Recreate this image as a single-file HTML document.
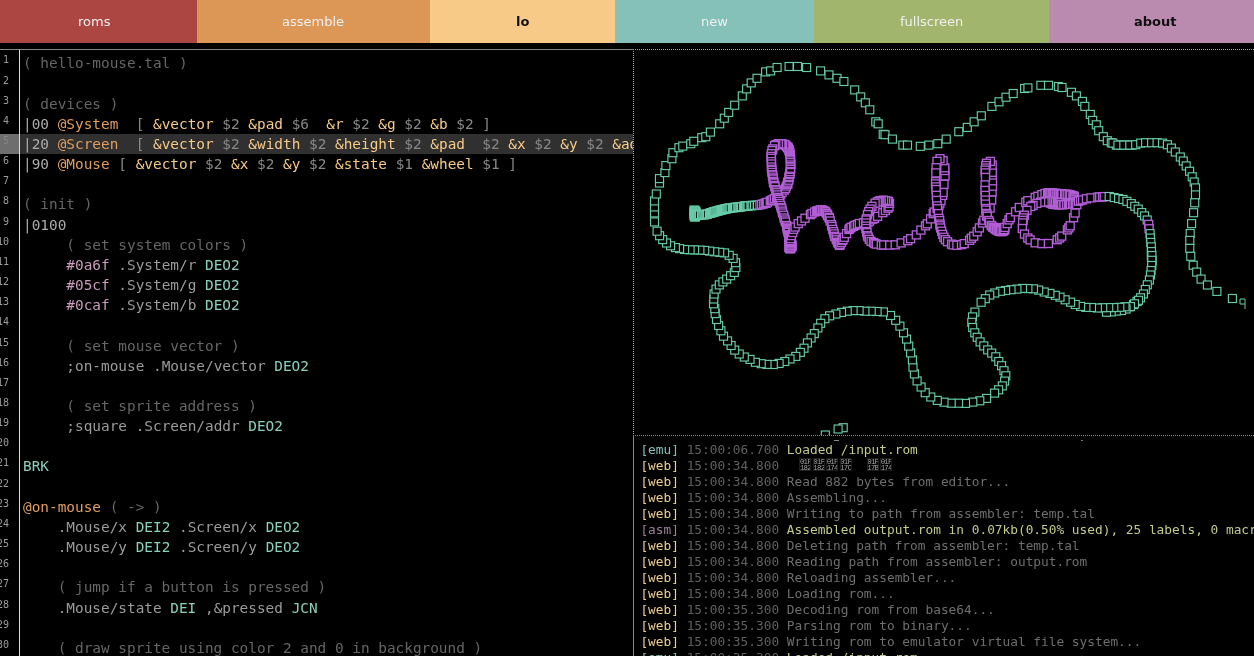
<!DOCTYPE html>
<html><head><meta charset="utf-8"><title>uxn playground</title>
<style>
*{box-sizing:border-box}
html,body{margin:0;padding:0;background:#000;width:1254px;height:656px;overflow:hidden}
body{font-family:"DejaVu Sans","Liberation Sans",sans-serif;font-size:13px;color:#d8d8d8;position:relative}
#nav{position:absolute;left:0;top:0;width:1254px;height:43px;display:flex}
#nav div span{will-change:transform;display:inline-block}
#nav div{height:43px;line-height:43px;text-align:center;color:#f0f0f0;font-size:13px}
#nav .b{font-weight:bold;color:#101010}
#ed{will-change:transform;position:absolute;left:0;top:49px;width:633px;height:607px;border-top:1px solid #888;overflow:hidden;
 font-family:"DejaVu Sans Mono","Liberation Mono",monospace;font-size:14.4px}
#gut{position:absolute;left:0;top:0;width:20px;height:607px;border-right:1px solid #ddd;overflow:hidden;padding-top:3.345px}
#gut div{height:20.16px;line-height:20.16px;font-size:10px;color:#9c9c9c;width:20px;white-space:nowrap;overflow:hidden;position:relative}
#gut div i{font-style:normal;position:absolute;right:11px;top:-3px}
#code{position:absolute;left:20px;top:3.345px;width:613px}
#code pre{margin:0;padding:0 3px;height:20.16px;line-height:20.16px;font:inherit;white-space:pre;overflow:hidden}
#code pre.act{background:#303030}
#code pre span{position:relative;top:2px}
.c{color:#666}.p{color:#acacac}.r{color:#9c9c9c}.l{color:#e09e62}.s{color:#f7ca88}.n{color:#c79cbc}.o{color:#8ad0bc}.g{color:#888}
#right{position:absolute;left:633px;top:49px;width:621px;height:607px;border-left:1px dotted #b0b0b0;border-top:1px dotted #a8a8a8}
#con{position:absolute;left:633px;top:435px;width:621px;height:221px;border-left:1px solid #888;border-top:1px dotted #888;overflow:hidden;will-change:transform;
 font-family:"DejaVu Sans Mono","Liberation Mono",monospace;font-size:12.8px;padding:6px 0 0 6.4px}
#con div{height:16px;line-height:16px;white-space:pre;color:#6e6e6e}
.sp{display:inline-block}
.tf{display:inline-block;width:12px;margin-right:1.4px;height:13px;font-size:7.4px;line-height:6.4px;letter-spacing:-0.75px;color:#a4a4a4;vertical-align:top;position:relative;top:0;padding-top:0.5px;text-align:center;white-space:nowrap;outline:1px solid #1c1c1c;outline-offset:-1px;font-family:"Liberation Mono","DejaVu Sans Mono",monospace}
.emu{color:#86c1b9}.web{color:#efd092}.asm{color:#a07f9a}.ok{color:#c3cb8c}.t{color:#606060}
#cv rect{width:8px;height:8px;fill:#000}
</style></head><body>
<div id="nav">
<div style="width:197px;background:#ab4642"><span style="position:relative;left:-4px">roms</span></div>
<div style="width:233px;background:#dc9656"><span>assemble</span></div>
<div class="b" style="width:185px;background:#f7ca88"><span>lo</span></div>
<div style="width:199px;background:#86c1b9"><span>new</span></div>
<div style="width:235px;background:#a1b56c"><span>fullscreen</span></div>
<div class="b" style="width:205px;background:#ba8baf"><span style="position:relative;left:4px">about</span></div>
</div>
<div id="ed">
<div id="gut">
<div><i>1</i></div><div><i>2</i></div><div><i>3</i></div><div><i>4</i></div><div style="background:#6e6e6e;color:#868686"><i>5</i></div><div><i>6</i></div><div><i>7</i></div><div><i>8</i></div><div><i>9</i></div><div><i>10</i></div>
<div><i>11</i></div><div><i>12</i></div><div><i>13</i></div><div><i>14</i></div><div><i>15</i></div><div><i>16</i></div><div><i>17</i></div><div><i>18</i></div><div><i>19</i></div><div><i>20</i></div>
<div><i>21</i></div><div><i>22</i></div><div><i>23</i></div><div><i>24</i></div><div><i>25</i></div><div><i>26</i></div><div><i>27</i></div><div><i>28</i></div><div><i>29</i></div><div><i>30</i></div><div><i>31</i></div>
</div>
<div id="code">
<pre><span class="c">( hello-mouse.tal )</span></pre>
<pre> </pre>
<pre><span class="c">( devices )</span></pre>
<pre><span class="p">|00</span> <span class="l">@System</span>  <span class="g">[</span> <span class="s">&amp;vector</span> <span class="g">$2</span> <span class="s">&amp;pad</span> <span class="g">$6</span>  <span class="s">&amp;r</span> <span class="g">$2</span> <span class="s">&amp;g</span> <span class="g">$2</span> <span class="s">&amp;b</span> <span class="g">$2</span> <span class="g">]</span></pre>
<pre class="act"><span class="p">|20</span> <span class="l">@Screen</span>  <span class="g">[</span> <span class="s">&amp;vector</span> <span class="g">$2</span> <span class="s">&amp;width</span> <span class="g">$2</span> <span class="s">&amp;height</span> <span class="g">$2</span> <span class="s">&amp;pad</span>  <span class="g">$2</span> <span class="s">&amp;x</span> <span class="g">$2</span> <span class="s">&amp;y</span> <span class="g">$2</span> <span class="s">&amp;addr</span> <span class="g">$2</span> <span class="s">&amp;pixel</span> <span class="g">$1</span> <span class="s">&amp;sprite</span> <span class="g">$1</span> <span class="g">]</span></pre>
<pre><span class="p">|90</span> <span class="l">@Mouse</span> <span class="g">[</span> <span class="s">&amp;vector</span> <span class="g">$2</span> <span class="s">&amp;x</span> <span class="g">$2</span> <span class="s">&amp;y</span> <span class="g">$2</span> <span class="s">&amp;state</span> <span class="g">$1</span> <span class="s">&amp;wheel</span> <span class="g">$1</span> <span class="g">]</span></pre>
<pre> </pre>
<pre><span class="c">( init )</span></pre>
<pre><span class="p">|0100</span></pre>
<pre>     <span class="c">( set system colors )</span></pre>
<pre>     <span class="n">#0a6f</span> <span class="r">.System/r</span> <span class="o">DEO2</span></pre>
<pre>     <span class="n">#05cf</span> <span class="r">.System/g</span> <span class="o">DEO2</span></pre>
<pre>     <span class="n">#0caf</span> <span class="r">.System/b</span> <span class="o">DEO2</span></pre>
<pre> </pre>
<pre>     <span class="c">( set mouse vector )</span></pre>
<pre>     <span class="r">;on-mouse</span> <span class="r">.Mouse/vector</span> <span class="o">DEO2</span></pre>
<pre> </pre>
<pre>     <span class="c">( set sprite address )</span></pre>
<pre>     <span class="r">;square</span> <span class="r">.Screen/addr</span> <span class="o">DEO2</span></pre>
<pre> </pre>
<pre><span class="o">BRK</span></pre>
<pre> </pre>
<pre><span class="l">@on-mouse</span> <span class="c">( -&gt; )</span></pre>
<pre>    <span class="r">.Mouse/x</span> <span class="o">DEI2</span> <span class="r">.Screen/x</span> <span class="o">DEO2</span></pre>
<pre>    <span class="r">.Mouse/y</span> <span class="o">DEI2</span> <span class="r">.Screen/y</span> <span class="o">DEO2</span></pre>
<pre> </pre>
<pre>    <span class="c">( jump if a button is pressed )</span></pre>
<pre>    <span class="r">.Mouse/state</span> <span class="o">DEI</span> <span class="r">,&amp;pressed</span> <span class="o">JCN</span></pre>
<pre> </pre>
<pre>    <span class="c">( draw sprite using color 2 and 0 in background )</span></pre>
<pre>    <span class="n">#02</span> <span class="r">.Screen/sprite</span> <span class="o">DEO</span></pre>
</div>
</div>
<div id="right"></div>
<svg id="cv" width="620" height="385" viewBox="634 50 620 385" style="position:absolute;left:634px;top:50px" shape-rendering="geometricPrecision">
<g stroke="#66ccaa" stroke-width="1.4">
<rect x="690.3" y="206.1" width="8" height="8"/>
<rect x="690.3" y="207.1" width="8" height="8"/>
<rect x="690.3" y="208.1" width="8" height="8"/>
<rect x="690.3" y="209.1" width="8" height="8"/>
<rect x="690.3" y="210.1" width="8" height="8"/>
<rect x="690.3" y="211.1" width="8" height="8"/>
<rect x="690.3" y="212.1" width="8" height="8"/>
<rect x="690.7" y="212.9" width="8" height="8"/>
<rect x="691.3" y="212.7" width="8" height="8"/>
<rect x="691.8" y="211.8" width="8" height="8"/>
<rect x="691.9" y="210.9" width="8" height="8"/>
<rect x="691.9" y="209.9" width="8" height="8"/>
<rect x="691.9" y="208.9" width="8" height="8"/>
<rect x="691.7" y="207.9" width="8" height="8"/>
<rect x="691.5" y="206.9" width="8" height="8"/>
<rect x="691.3" y="207.8" width="8" height="8"/>
<rect x="691.1" y="208.8" width="8" height="8"/>
<rect x="691.5" y="209.6" width="8" height="8"/>
<rect x="692.3" y="210.2" width="8" height="8"/>
<rect x="693.2" y="210.6" width="8" height="8"/>
<rect x="694.2" y="210.8" width="8" height="8"/>
</g>
<g stroke="#66ccaa" stroke-width="1.4">
<rect x="694.2" y="210.8" width="8" height="8"/>
<rect x="695.5" y="210.8" width="8" height="8"/>
<rect x="697.7" y="210.8" width="8" height="8"/>
<rect x="698.9" y="210.8" width="8" height="8"/>
<rect x="700.0" y="210.7" width="8" height="8"/>
<rect x="701.1" y="210.5" width="8" height="8"/>
<rect x="702.2" y="210.3" width="8" height="8"/>
<rect x="703.3" y="210.1" width="8" height="8"/>
<rect x="705.5" y="209.4" width="8" height="8"/>
<rect x="706.5" y="209.1" width="8" height="8"/>
<rect x="707.6" y="208.7" width="8" height="8"/>
<rect x="708.7" y="208.4" width="8" height="8"/>
<rect x="709.7" y="208.0" width="8" height="8"/>
<rect x="710.8" y="207.7" width="8" height="8"/>
<rect x="711.9" y="207.4" width="8" height="8"/>
<rect x="713.0" y="207.1" width="8" height="8"/>
<rect x="714.1" y="206.8" width="8" height="8"/>
<rect x="715.1" y="206.5" width="8" height="8"/>
<rect x="716.2" y="206.2" width="8" height="8"/>
<rect x="717.3" y="205.9" width="8" height="8"/>
<rect x="718.4" y="205.7" width="8" height="8"/>
<rect x="719.5" y="205.4" width="8" height="8"/>
<rect x="720.6" y="205.1" width="8" height="8"/>
<rect x="721.7" y="204.9" width="8" height="8"/>
<rect x="722.8" y="204.7" width="8" height="8"/>
<rect x="723.9" y="204.4" width="8" height="8"/>
<rect x="725.0" y="204.2" width="8" height="8"/>
<rect x="726.1" y="204.1" width="8" height="8"/>
<rect x="728.3" y="203.8" width="8" height="8"/>
<rect x="729.5" y="203.6" width="8" height="8"/>
<rect x="730.6" y="203.5" width="8" height="8"/>
<rect x="731.7" y="203.4" width="8" height="8"/>
<rect x="733.9" y="203.1" width="8" height="8"/>
<rect x="735.0" y="203.0" width="8" height="8"/>
<rect x="736.2" y="202.8" width="8" height="8"/>
<rect x="737.3" y="202.7" width="8" height="8"/>
<rect x="739.5" y="202.4" width="8" height="8"/>
<rect x="740.6" y="202.2" width="8" height="8"/>
<rect x="741.7" y="202.1" width="8" height="8"/>
<rect x="742.9" y="202.0" width="8" height="8"/>
<rect x="744.0" y="201.9" width="8" height="8"/>
<rect x="747.0" y="201.6" width="8" height="8"/>
<rect x="748.1" y="201.5" width="8" height="8"/>
<rect x="750.3" y="201.4" width="8" height="8"/>
<rect x="753.3" y="201.2" width="8" height="8"/>
</g>
<g stroke="#b25fd6" stroke-width="1.35">
<rect x="755.9" y="200.9" width="8" height="8"/>
<rect x="757.6" y="200.3" width="8" height="8"/>
<rect x="759.7" y="199.9" width="8" height="8"/>
<rect x="761.2" y="199.3" width="8" height="8"/>
<rect x="762.3" y="199.0" width="8" height="8"/>
<rect x="763.2" y="198.4" width="8" height="8"/>
<rect x="766.3" y="196.9" width="8" height="8"/>
<rect x="767.5" y="196.3" width="8" height="8"/>
<rect x="768.8" y="196.0" width="8" height="8"/>
<rect x="770.4" y="194.6" width="8" height="8"/>
<rect x="772.5" y="193.3" width="8" height="8"/>
<rect x="774.3" y="192.1" width="8" height="8"/>
<rect x="776.6" y="190.3" width="8" height="8"/>
<rect x="778.0" y="188.4" width="8" height="8"/>
<rect x="780.1" y="186.0" width="8" height="8"/>
<rect x="781.5" y="184.4" width="8" height="8"/>
<rect x="782.4" y="182.0" width="8" height="8"/>
<rect x="783.7" y="180.3" width="8" height="8"/>
<rect x="783.5" y="179.2" width="8" height="8"/>
<rect x="783.7" y="178.1" width="8" height="8"/>
<rect x="784.8" y="176.2" width="8" height="8"/>
<rect x="785.1" y="173.7" width="8" height="8"/>
<rect x="785.1" y="172.5" width="8" height="8"/>
<rect x="785.8" y="170.6" width="8" height="8"/>
<rect x="785.9" y="169.4" width="8" height="8"/>
<rect x="785.9" y="167.5" width="8" height="8"/>
<rect x="786.6" y="165.3" width="8" height="8"/>
<rect x="786.6" y="164.2" width="8" height="8"/>
<rect x="786.7" y="160.6" width="8" height="8"/>
<rect x="786.6" y="159.7" width="8" height="8"/>
<rect x="786.3" y="157.6" width="8" height="8"/>
<rect x="786.4" y="155.9" width="8" height="8"/>
<rect x="786.6" y="154.6" width="8" height="8"/>
<rect x="786.3" y="153.0" width="8" height="8"/>
<rect x="786.4" y="150.7" width="8" height="8"/>
<rect x="785.8" y="148.9" width="8" height="8"/>
<rect x="785.5" y="147.6" width="8" height="8"/>
<rect x="785.1" y="146.6" width="8" height="8"/>
<rect x="785.1" y="145.6" width="8" height="8"/>
<rect x="784.2" y="144.4" width="8" height="8"/>
<rect x="784.0" y="143.4" width="8" height="8"/>
<rect x="783.4" y="143.3" width="8" height="8"/>
<rect x="782.6" y="142.3" width="8" height="8"/>
<rect x="781.5" y="141.2" width="8" height="8"/>
<rect x="780.2" y="140.4" width="8" height="8"/>
<rect x="778.4" y="140.3" width="8" height="8"/>
<rect x="777.3" y="139.9" width="8" height="8"/>
<rect x="776.9" y="140.0" width="8" height="8"/>
<rect x="774.3" y="139.7" width="8" height="8"/>
<rect x="771.8" y="140.8" width="8" height="8"/>
<rect x="770.5" y="141.6" width="8" height="8"/>
<rect x="768.8" y="144.9" width="8" height="8"/>
<rect x="768.0" y="146.6" width="8" height="8"/>
<rect x="767.4" y="149.7" width="8" height="8"/>
<rect x="767.0" y="152.4" width="8" height="8"/>
<rect x="767.3" y="154.3" width="8" height="8"/>
<rect x="767.5" y="157.6" width="8" height="8"/>
<rect x="767.5" y="160.0" width="8" height="8"/>
<rect x="767.4" y="163.0" width="8" height="8"/>
<rect x="767.6" y="165.2" width="8" height="8"/>
<rect x="767.9" y="166.3" width="8" height="8"/>
<rect x="768.0" y="168.4" width="8" height="8"/>
<rect x="768.6" y="170.7" width="8" height="8"/>
<rect x="768.5" y="171.9" width="8" height="8"/>
<rect x="769.1" y="174.0" width="8" height="8"/>
<rect x="769.3" y="175.1" width="8" height="8"/>
<rect x="769.6" y="177.3" width="8" height="8"/>
<rect x="769.5" y="178.3" width="8" height="8"/>
<rect x="769.9" y="179.1" width="8" height="8"/>
<rect x="770.8" y="181.3" width="8" height="8"/>
<rect x="770.9" y="182.7" width="8" height="8"/>
<rect x="771.8" y="185.7" width="8" height="8"/>
<rect x="772.1" y="186.9" width="8" height="8"/>
<rect x="772.9" y="188.7" width="8" height="8"/>
<rect x="773.4" y="190.9" width="8" height="8"/>
<rect x="773.9" y="193.3" width="8" height="8"/>
<rect x="774.4" y="194.2" width="8" height="8"/>
<rect x="774.8" y="195.5" width="8" height="8"/>
<rect x="775.3" y="197.4" width="8" height="8"/>
<rect x="775.9" y="199.5" width="8" height="8"/>
<rect x="776.7" y="201.5" width="8" height="8"/>
<rect x="777.2" y="203.6" width="8" height="8"/>
<rect x="777.8" y="204.8" width="8" height="8"/>
<rect x="778.4" y="207.1" width="8" height="8"/>
<rect x="778.6" y="209.0" width="8" height="8"/>
<rect x="779.7" y="211.2" width="8" height="8"/>
<rect x="780.1" y="214.0" width="8" height="8"/>
<rect x="781.0" y="216.0" width="8" height="8"/>
<rect x="781.5" y="218.0" width="8" height="8"/>
<rect x="782.6" y="221.5" width="8" height="8"/>
<rect x="783.3" y="223.0" width="8" height="8"/>
<rect x="783.4" y="224.3" width="8" height="8"/>
<rect x="783.3" y="225.3" width="8" height="8"/>
<rect x="784.0" y="225.8" width="8" height="8"/>
<rect x="784.2" y="226.8" width="8" height="8"/>
<rect x="784.1" y="228.0" width="8" height="8"/>
<rect x="784.4" y="228.3" width="8" height="8"/>
<rect x="784.6" y="230.8" width="8" height="8"/>
<rect x="784.7" y="231.4" width="8" height="8"/>
<rect x="784.8" y="232.5" width="8" height="8"/>
<rect x="784.8" y="233.7" width="8" height="8"/>
<rect x="785.2" y="234.6" width="8" height="8"/>
<rect x="785.3" y="235.8" width="8" height="8"/>
<rect x="785.5" y="236.6" width="8" height="8"/>
<rect x="785.8" y="238.2" width="8" height="8"/>
<rect x="785.9" y="238.6" width="8" height="8"/>
<rect x="785.5" y="239.3" width="8" height="8"/>
<rect x="785.7" y="240.5" width="8" height="8"/>
<rect x="785.2" y="241.5" width="8" height="8"/>
<rect x="785.5" y="242.8" width="8" height="8"/>
<rect x="784.9" y="243.3" width="8" height="8"/>
<rect x="785.5" y="244.5" width="8" height="8"/>
<rect x="786.3" y="244.6" width="8" height="8"/>
<rect x="786.6" y="244.7" width="8" height="8"/>
<rect x="787.5" y="243.0" width="8" height="8"/>
<rect x="788.0" y="242.4" width="8" height="8"/>
<rect x="788.0" y="241.1" width="8" height="8"/>
<rect x="787.5" y="239.7" width="8" height="8"/>
<rect x="786.4" y="239.5" width="8" height="8"/>
<rect x="786.0" y="241.0" width="8" height="8"/>
<rect x="786.4" y="241.7" width="8" height="8"/>
<rect x="785.9" y="242.8" width="8" height="8"/>
</g>
<g stroke="#b25fd6" stroke-width="1.35">
<rect x="786.3" y="243.5" width="8" height="8"/>
<rect x="786.6" y="243.0" width="8" height="8"/>
<rect x="786.5" y="241.7" width="8" height="8"/>
<rect x="786.4" y="241.4" width="8" height="8"/>
<rect x="786.3" y="240.1" width="8" height="8"/>
<rect x="786.5" y="239.0" width="8" height="8"/>
<rect x="786.5" y="238.5" width="8" height="8"/>
<rect x="786.6" y="237.6" width="8" height="8"/>
<rect x="786.4" y="236.5" width="8" height="8"/>
<rect x="786.7" y="234.7" width="8" height="8"/>
<rect x="787.4" y="231.6" width="8" height="8"/>
<rect x="788.7" y="228.5" width="8" height="8"/>
<rect x="789.7" y="225.3" width="8" height="8"/>
<rect x="791.1" y="223.0" width="8" height="8"/>
<rect x="794.2" y="219.6" width="8" height="8"/>
<rect x="797.5" y="216.9" width="8" height="8"/>
<rect x="801.0" y="214.2" width="8" height="8"/>
<rect x="806.4" y="210.6" width="8" height="8"/>
<rect x="807.9" y="209.6" width="8" height="8"/>
<rect x="810.7" y="208.0" width="8" height="8"/>
<rect x="812.7" y="207.1" width="8" height="8"/>
<rect x="813.6" y="207.2" width="8" height="8"/>
<rect x="814.5" y="206.7" width="8" height="8"/>
<rect x="815.6" y="206.3" width="8" height="8"/>
<rect x="816.4" y="206.2" width="8" height="8"/>
<rect x="817.0" y="205.9" width="8" height="8"/>
<rect x="818.6" y="206.1" width="8" height="8"/>
<rect x="819.9" y="206.9" width="8" height="8"/>
<rect x="820.8" y="207.4" width="8" height="8"/>
<rect x="821.6" y="208.0" width="8" height="8"/>
<rect x="822.7" y="209.4" width="8" height="8"/>
<rect x="823.5" y="210.9" width="8" height="8"/>
<rect x="823.6" y="211.6" width="8" height="8"/>
<rect x="825.0" y="213.4" width="8" height="8"/>
<rect x="825.5" y="214.3" width="8" height="8"/>
<rect x="826.2" y="217.0" width="8" height="8"/>
<rect x="827.5" y="220.7" width="8" height="8"/>
<rect x="828.0" y="222.5" width="8" height="8"/>
<rect x="828.7" y="225.4" width="8" height="8"/>
<rect x="829.6" y="227.7" width="8" height="8"/>
<rect x="830.1" y="229.9" width="8" height="8"/>
<rect x="830.7" y="232.3" width="8" height="8"/>
<rect x="832.0" y="233.7" width="8" height="8"/>
<rect x="832.5" y="235.8" width="8" height="8"/>
<rect x="833.6" y="238.2" width="8" height="8"/>
<rect x="834.2" y="238.6" width="8" height="8"/>
<rect x="834.5" y="239.3" width="8" height="8"/>
<rect x="835.2" y="240.6" width="8" height="8"/>
<rect x="835.7" y="241.0" width="8" height="8"/>
</g>
<g stroke="#b25fd6" stroke-width="1.35">
<rect x="835.7" y="241.4" width="8" height="8"/>
<rect x="836.0" y="240.3" width="8" height="8"/>
<rect x="837.4" y="238.5" width="8" height="8"/>
<rect x="838.2" y="236.4" width="8" height="8"/>
<rect x="839.0" y="235.7" width="8" height="8"/>
<rect x="840.3" y="233.3" width="8" height="8"/>
<rect x="842.6" y="229.6" width="8" height="8"/>
<rect x="845.0" y="225.5" width="8" height="8"/>
<rect x="845.8" y="224.5" width="8" height="8"/>
<rect x="847.0" y="223.4" width="8" height="8"/>
<rect x="849.5" y="222.4" width="8" height="8"/>
<rect x="850.9" y="221.4" width="8" height="8"/>
<rect x="853.3" y="220.7" width="8" height="8"/>
<rect x="855.3" y="219.5" width="8" height="8"/>
<rect x="859.5" y="218.8" width="8" height="8"/>
</g>
<g stroke="#b25fd6" stroke-width="1.35">
<rect x="863.9" y="218.2" width="8" height="8"/>
<rect x="865.6" y="217.1" width="8" height="8"/>
<rect x="868.8" y="215.2" width="8" height="8"/>
<rect x="870.6" y="214.3" width="8" height="8"/>
<rect x="873.6" y="212.3" width="8" height="8"/>
<rect x="878.8" y="208.7" width="8" height="8"/>
<rect x="881.4" y="206.5" width="8" height="8"/>
<rect x="884.0" y="204.2" width="8" height="8"/>
<rect x="885.0" y="202.7" width="8" height="8"/>
<rect x="885.5" y="199.4" width="8" height="8"/>
<rect x="884.5" y="197.6" width="8" height="8"/>
<rect x="883.5" y="197.2" width="8" height="8"/>
<rect x="881.7" y="196.7" width="8" height="8"/>
<rect x="879.6" y="196.2" width="8" height="8"/>
<rect x="877.2" y="196.5" width="8" height="8"/>
<rect x="875.8" y="197.1" width="8" height="8"/>
<rect x="874.8" y="197.3" width="8" height="8"/>
<rect x="873.3" y="197.9" width="8" height="8"/>
<rect x="871.1" y="199.2" width="8" height="8"/>
<rect x="867.9" y="202.3" width="8" height="8"/>
<rect x="866.1" y="205.1" width="8" height="8"/>
<rect x="864.7" y="207.6" width="8" height="8"/>
<rect x="863.5" y="210.6" width="8" height="8"/>
<rect x="862.5" y="214.8" width="8" height="8"/>
<rect x="862.1" y="216.0" width="8" height="8"/>
<rect x="862.0" y="219.0" width="8" height="8"/>
<rect x="861.8" y="222.1" width="8" height="8"/>
<rect x="861.9" y="224.5" width="8" height="8"/>
<rect x="862.7" y="227.5" width="8" height="8"/>
<rect x="863.0" y="228.7" width="8" height="8"/>
<rect x="863.5" y="231.7" width="8" height="8"/>
<rect x="864.1" y="232.9" width="8" height="8"/>
<rect x="865.3" y="235.3" width="8" height="8"/>
<rect x="867.1" y="237.4" width="8" height="8"/>
<rect x="869.5" y="238.6" width="8" height="8"/>
<rect x="870.9" y="239.5" width="8" height="8"/>
<rect x="872.3" y="240.1" width="8" height="8"/>
<rect x="877.3" y="241.1" width="8" height="8"/>
<rect x="879.7" y="240.9" width="8" height="8"/>
<rect x="885.7" y="241.1" width="8" height="8"/>
<rect x="891.2" y="240.8" width="8" height="8"/>
<rect x="897.1" y="238.9" width="8" height="8"/>
<rect x="903.8" y="236.7" width="8" height="8"/>
<rect x="906.6" y="234.7" width="8" height="8"/>
<rect x="912.3" y="230.9" width="8" height="8"/>
<rect x="916.9" y="226.1" width="8" height="8"/>
<rect x="921.5" y="221.8" width="8" height="8"/>
<rect x="923.3" y="219.8" width="8" height="8"/>
<rect x="926.6" y="214.9" width="8" height="8"/>
<rect x="929.2" y="209.6" width="8" height="8"/>
</g>
<g stroke="#b25fd6" stroke-width="1.35">
<rect x="930.2" y="208.0" width="8" height="8"/>
<rect x="933.2" y="204.1" width="8" height="8"/>
<rect x="935.0" y="201.3" width="8" height="8"/>
<rect x="935.9" y="199.0" width="8" height="8"/>
<rect x="937.0" y="196.5" width="8" height="8"/>
<rect x="938.7" y="191.4" width="8" height="8"/>
<rect x="939.1" y="188.5" width="8" height="8"/>
<rect x="940.0" y="180.3" width="8" height="8"/>
<rect x="941.0" y="171.9" width="8" height="8"/>
<rect x="940.7" y="166.5" width="8" height="8"/>
<rect x="940.8" y="163.8" width="8" height="8"/>
<rect x="939.1" y="156.7" width="8" height="8"/>
<rect x="936.0" y="154.7" width="8" height="8"/>
<rect x="933.0" y="157.3" width="8" height="8"/>
<rect x="932.1" y="163.7" width="8" height="8"/>
<rect x="931.9" y="168.9" width="8" height="8"/>
<rect x="931.7" y="177.7" width="8" height="8"/>
<rect x="931.5" y="179.9" width="8" height="8"/>
<rect x="931.9" y="182.9" width="8" height="8"/>
<rect x="932.1" y="185.5" width="8" height="8"/>
<rect x="932.3" y="191.3" width="8" height="8"/>
<rect x="932.6" y="196.4" width="8" height="8"/>
<rect x="933.1" y="201.9" width="8" height="8"/>
<rect x="933.5" y="204.8" width="8" height="8"/>
<rect x="934.4" y="209.6" width="8" height="8"/>
<rect x="934.9" y="214.4" width="8" height="8"/>
<rect x="935.6" y="216.6" width="8" height="8"/>
<rect x="936.0" y="220.1" width="8" height="8"/>
<rect x="936.1" y="221.8" width="8" height="8"/>
<rect x="936.7" y="224.0" width="8" height="8"/>
<rect x="937.7" y="227.2" width="8" height="8"/>
<rect x="938.7" y="230.4" width="8" height="8"/>
<rect x="939.9" y="233.3" width="8" height="8"/>
<rect x="941.4" y="235.7" width="8" height="8"/>
<rect x="943.6" y="237.7" width="8" height="8"/>
<rect x="947.5" y="240.1" width="8" height="8"/>
<rect x="949.2" y="240.9" width="8" height="8"/>
<rect x="952.9" y="241.3" width="8" height="8"/>
<rect x="957.5" y="240.6" width="8" height="8"/>
<rect x="960.2" y="239.6" width="8" height="8"/>
<rect x="965.6" y="236.3" width="8" height="8"/>
<rect x="967.4" y="234.2" width="8" height="8"/>
<rect x="969.7" y="232.2" width="8" height="8"/>
<rect x="973.2" y="227.8" width="8" height="8"/>
</g>
<g stroke="#b25fd6" stroke-width="1.35">
<rect x="975.4" y="223.9" width="8" height="8"/>
<rect x="978.5" y="219.0" width="8" height="8"/>
<rect x="979.9" y="216.2" width="8" height="8"/>
<rect x="982.5" y="211.5" width="8" height="8"/>
<rect x="986.1" y="204.1" width="8" height="8"/>
<rect x="987.7" y="195.9" width="8" height="8"/>
<rect x="988.1" y="187.8" width="8" height="8"/>
<rect x="988.5" y="182.2" width="8" height="8"/>
<rect x="988.5" y="176.8" width="8" height="8"/>
<rect x="988.3" y="171.0" width="8" height="8"/>
<rect x="988.3" y="168.3" width="8" height="8"/>
<rect x="988.2" y="161.1" width="8" height="8"/>
<rect x="986.4" y="157.4" width="8" height="8"/>
<rect x="982.5" y="159.3" width="8" height="8"/>
<rect x="981.7" y="161.6" width="8" height="8"/>
<rect x="981.7" y="164.0" width="8" height="8"/>
<rect x="981.1" y="166.1" width="8" height="8"/>
<rect x="981.4" y="168.9" width="8" height="8"/>
<rect x="981.5" y="173.4" width="8" height="8"/>
<rect x="981.1" y="180.9" width="8" height="8"/>
<rect x="981.0" y="186.4" width="8" height="8"/>
<rect x="981.3" y="191.4" width="8" height="8"/>
<rect x="981.3" y="196.1" width="8" height="8"/>
<rect x="981.5" y="200.1" width="8" height="8"/>
<rect x="982.0" y="204.5" width="8" height="8"/>
<rect x="981.8" y="206.1" width="8" height="8"/>
<rect x="982.7" y="209.4" width="8" height="8"/>
<rect x="982.9" y="210.8" width="8" height="8"/>
<rect x="983.2" y="212.3" width="8" height="8"/>
<rect x="984.8" y="216.5" width="8" height="8"/>
<rect x="985.5" y="218.3" width="8" height="8"/>
<rect x="987.2" y="221.4" width="8" height="8"/>
<rect x="987.7" y="221.8" width="8" height="8"/>
<rect x="988.9" y="223.4" width="8" height="8"/>
<rect x="989.7" y="223.4" width="8" height="8"/>
<rect x="990.6" y="224.5" width="8" height="8"/>
<rect x="991.9" y="225.4" width="8" height="8"/>
<rect x="992.6" y="225.8" width="8" height="8"/>
<rect x="993.9" y="226.5" width="8" height="8"/>
<rect x="994.7" y="226.9" width="8" height="8"/>
<rect x="995.8" y="227.2" width="8" height="8"/>
<rect x="996.6" y="227.4" width="8" height="8"/>
<rect x="997.3" y="227.7" width="8" height="8"/>
<rect x="998.6" y="227.2" width="8" height="8"/>
<rect x="998.9" y="227.1" width="8" height="8"/>
<rect x="999.6" y="226.3" width="8" height="8"/>
<rect x="1000.7" y="225.9" width="8" height="8"/>
<rect x="1000.4" y="225.2" width="8" height="8"/>
<rect x="999.2" y="224.3" width="8" height="8"/>
<rect x="998.0" y="223.8" width="8" height="8"/>
<rect x="997.3" y="224.1" width="8" height="8"/>
<rect x="996.5" y="223.9" width="8" height="8"/>
<rect x="995.3" y="224.2" width="8" height="8"/>
<rect x="994.5" y="224.6" width="8" height="8"/>
<rect x="995.0" y="225.3" width="8" height="8"/>
<rect x="996.3" y="225.5" width="8" height="8"/>
<rect x="996.8" y="226.3" width="8" height="8"/>
<rect x="997.8" y="226.3" width="8" height="8"/>
<rect x="998.2" y="227.1" width="8" height="8"/>
</g>
<g stroke="#b25fd6" stroke-width="1.35">
<rect x="996.0" y="226.5" width="8" height="8"/>
<rect x="996.6" y="226.6" width="8" height="8"/>
<rect x="998.0" y="226.5" width="8" height="8"/>
<rect x="999.5" y="225.6" width="8" height="8"/>
<rect x="1000.0" y="225.5" width="8" height="8"/>
<rect x="1000.8" y="223.4" width="8" height="8"/>
<rect x="1003.2" y="219.6" width="8" height="8"/>
<rect x="1004.9" y="215.9" width="8" height="8"/>
<rect x="1006.4" y="213.6" width="8" height="8"/>
<rect x="1011.6" y="207.8" width="8" height="8"/>
<rect x="1015.3" y="203.5" width="8" height="8"/>
<rect x="1021.8" y="198.3" width="8" height="8"/>
<rect x="1023.8" y="196.7" width="8" height="8"/>
<rect x="1031.2" y="193.4" width="8" height="8"/>
<rect x="1033.9" y="192.3" width="8" height="8"/>
<rect x="1037.9" y="190.6" width="8" height="8"/>
<rect x="1041.0" y="189.5" width="8" height="8"/>
<rect x="1043.6" y="189.0" width="8" height="8"/>
<rect x="1044.6" y="189.1" width="8" height="8"/>
<rect x="1045.8" y="189.2" width="8" height="8"/>
<rect x="1046.3" y="189.3" width="8" height="8"/>
<rect x="1047.9" y="189.1" width="8" height="8"/>
<rect x="1048.8" y="189.1" width="8" height="8"/>
<rect x="1049.7" y="189.3" width="8" height="8"/>
<rect x="1050.7" y="189.6" width="8" height="8"/>
<rect x="1052.1" y="189.4" width="8" height="8"/>
<rect x="1053.1" y="189.5" width="8" height="8"/>
<rect x="1054.6" y="189.8" width="8" height="8"/>
<rect x="1055.9" y="190.3" width="8" height="8"/>
<rect x="1056.7" y="190.2" width="8" height="8"/>
<rect x="1057.3" y="189.9" width="8" height="8"/>
<rect x="1058.0" y="190.0" width="8" height="8"/>
<rect x="1060.6" y="190.3" width="8" height="8"/>
<rect x="1061.4" y="190.7" width="8" height="8"/>
<rect x="1061.9" y="190.3" width="8" height="8"/>
<rect x="1063.8" y="190.3" width="8" height="8"/>
<rect x="1065.8" y="190.8" width="8" height="8"/>
<rect x="1066.6" y="191.0" width="8" height="8"/>
<rect x="1068.9" y="191.7" width="8" height="8"/>
<rect x="1070.1" y="192.4" width="8" height="8"/>
<rect x="1070.4" y="193.3" width="8" height="8"/>
<rect x="1070.1" y="194.9" width="8" height="8"/>
<rect x="1069.9" y="195.7" width="8" height="8"/>
<rect x="1069.3" y="197.2" width="8" height="8"/>
<rect x="1069.0" y="198.3" width="8" height="8"/>
<rect x="1066.9" y="199.0" width="8" height="8"/>
<rect x="1065.3" y="199.6" width="8" height="8"/>
<rect x="1063.4" y="199.9" width="8" height="8"/>
<rect x="1061.9" y="200.1" width="8" height="8"/>
<rect x="1060.5" y="200.5" width="8" height="8"/>
<rect x="1058.6" y="200.7" width="8" height="8"/>
<rect x="1057.6" y="200.6" width="8" height="8"/>
<rect x="1056.3" y="200.5" width="8" height="8"/>
<rect x="1054.5" y="200.9" width="8" height="8"/>
<rect x="1052.1" y="200.7" width="8" height="8"/>
<rect x="1051.2" y="200.3" width="8" height="8"/>
<rect x="1049.4" y="200.3" width="8" height="8"/>
<rect x="1048.3" y="199.9" width="8" height="8"/>
<rect x="1047.3" y="199.0" width="8" height="8"/>
<rect x="1046.4" y="198.7" width="8" height="8"/>
<rect x="1045.6" y="198.6" width="8" height="8"/>
<rect x="1045.4" y="198.0" width="8" height="8"/>
<rect x="1043.8" y="197.3" width="8" height="8"/>
<rect x="1043.1" y="196.7" width="8" height="8"/>
<rect x="1041.8" y="197.8" width="8" height="8"/>
<rect x="1040.1" y="197.9" width="8" height="8"/>
<rect x="1036.7" y="198.2" width="8" height="8"/>
<rect x="1032.9" y="199.4" width="8" height="8"/>
<rect x="1029.0" y="201.4" width="8" height="8"/>
<rect x="1026.8" y="202.5" width="8" height="8"/>
<rect x="1023.0" y="206.4" width="8" height="8"/>
<rect x="1020.4" y="211.2" width="8" height="8"/>
<rect x="1019.2" y="213.9" width="8" height="8"/>
<rect x="1019.0" y="216.3" width="8" height="8"/>
<rect x="1018.6" y="218.9" width="8" height="8"/>
<rect x="1018.3" y="224.5" width="8" height="8"/>
<rect x="1020.5" y="230.1" width="8" height="8"/>
<rect x="1023.8" y="234.0" width="8" height="8"/>
<rect x="1026.1" y="235.9" width="8" height="8"/>
<rect x="1031.2" y="238.8" width="8" height="8"/>
<rect x="1037.9" y="239.6" width="8" height="8"/>
<rect x="1044.4" y="239.5" width="8" height="8"/>
<rect x="1053.2" y="235.7" width="8" height="8"/>
<rect x="1055.7" y="234.0" width="8" height="8"/>
<rect x="1057.7" y="232.1" width="8" height="8"/>
<rect x="1063.4" y="225.9" width="8" height="8"/>
<rect x="1064.8" y="223.9" width="8" height="8"/>
<rect x="1066.2" y="221.8" width="8" height="8"/>
<rect x="1069.6" y="213.7" width="8" height="8"/>
<rect x="1071.1" y="209.0" width="8" height="8"/>
<rect x="1072.8" y="200.7" width="8" height="8"/>
<rect x="1074.5" y="197.2" width="8" height="8"/>
<rect x="1076.6" y="196.5" width="8" height="8"/>
<rect x="1078.6" y="195.9" width="8" height="8"/>
<rect x="1082.4" y="194.8" width="8" height="8"/>
<rect x="1087.0" y="193.9" width="8" height="8"/>
<rect x="1093.9" y="193.1" width="8" height="8"/>
<rect x="1095.7" y="193.0" width="8" height="8"/>
<rect x="1098.5" y="193.0" width="8" height="8"/>
<rect x="1100.2" y="192.6" width="8" height="8"/>
</g>
<g stroke="#66ccaa" stroke-width="1.15">
<rect x="1105.2" y="192.5" width="8" height="8"/>
<rect x="1110.2" y="193.6" width="8" height="8"/>
<rect x="1114.6" y="194.5" width="8" height="8"/>
<rect x="1119.0" y="195.5" width="8" height="8"/>
<rect x="1122.9" y="197.3" width="8" height="8"/>
<rect x="1127.3" y="199.6" width="8" height="8"/>
<rect x="1130.8" y="202.3" width="8" height="8"/>
<rect x="1134.2" y="205.1" width="8" height="8"/>
<rect x="1137.7" y="208.6" width="8" height="8"/>
<rect x="1140.6" y="211.9" width="8" height="8"/>
<rect x="1143.2" y="216.0" width="8" height="8"/>
</g>
<g stroke="#b25fd6" stroke-width="1.35">
<rect x="1144.7" y="220.4" width="8" height="8"/>
<rect x="1145.1" y="224.8" width="8" height="8"/>
</g>
<g stroke="#66ccaa" stroke-width="1.15">
<rect x="1146.1" y="229.6" width="8" height="8"/>
<rect x="1146.4" y="234.1" width="8" height="8"/>
<rect x="1146.8" y="238.4" width="8" height="8"/>
<rect x="1147.3" y="242.9" width="8" height="8"/>
<rect x="1147.5" y="247.6" width="8" height="8"/>
<rect x="1147.3" y="252.2" width="8" height="8"/>
<rect x="1148.0" y="257.2" width="8" height="8"/>
<rect x="1147.7" y="261.5" width="8" height="8"/>
</g>
<g stroke="#66ccaa" stroke-width="1.15">
<rect x="1147.9" y="251.5" width="8" height="8"/>
<rect x="1147.8" y="256.3" width="8" height="8"/>
<rect x="1147.7" y="261.5" width="8" height="8"/>
<rect x="1147.1" y="266.5" width="8" height="8"/>
<rect x="1146.4" y="271.0" width="8" height="8"/>
<rect x="1145.4" y="276.0" width="8" height="8"/>
<rect x="1143.3" y="280.8" width="8" height="8"/>
<rect x="1141.3" y="285.5" width="8" height="8"/>
<rect x="1139.4" y="290.0" width="8" height="8"/>
<rect x="1136.5" y="293.8" width="8" height="8"/>
<rect x="1133.0" y="297.5" width="8" height="8"/>
<rect x="1129.5" y="300.6" width="8" height="8"/>
<rect x="1125.1" y="302.8" width="8" height="8"/>
<rect x="1119.9" y="304.5" width="8" height="8"/>
</g>
<g stroke="#66ccaa" stroke-width="1.15">
<rect x="1134.5" y="296.3" width="8" height="8"/>
<rect x="1130.5" y="299.8" width="8" height="8"/>
<rect x="1126.4" y="302.6" width="8" height="8"/>
<rect x="1122.1" y="305.0" width="8" height="8"/>
<rect x="1117.5" y="306.5" width="8" height="8"/>
<rect x="1112.3" y="307.1" width="8" height="8"/>
<rect x="1107.2" y="307.9" width="8" height="8"/>
<rect x="1102.5" y="308.2" width="8" height="8"/>
</g>
<g stroke="#66ccaa" stroke-width="1.15">
<rect x="1121.0" y="302.8" width="8" height="8"/>
<rect x="1115.8" y="303.3" width="8" height="8"/>
<rect x="1109.8" y="303.6" width="8" height="8"/>
<rect x="1104.7" y="303.6" width="8" height="8"/>
<rect x="1098.7" y="303.7" width="8" height="8"/>
<rect x="1093.4" y="304.0" width="8" height="8"/>
<rect x="1087.5" y="303.5" width="8" height="8"/>
<rect x="1081.9" y="303.4" width="8" height="8"/>
<rect x="1076.6" y="302.4" width="8" height="8"/>
<rect x="1071.2" y="300.5" width="8" height="8"/>
<rect x="1066.6" y="298.2" width="8" height="8"/>
<rect x="1061.1" y="295.8" width="8" height="8"/>
<rect x="1056.0" y="293.1" width="8" height="8"/>
<rect x="1051.3" y="291.3" width="8" height="8"/>
<rect x="1045.9" y="289.4" width="8" height="8"/>
<rect x="1040.2" y="288.0" width="8" height="8"/>
<rect x="1034.7" y="286.1" width="8" height="8"/>
<rect x="1029.4" y="284.8" width="8" height="8"/>
<rect x="1023.9" y="284.6" width="8" height="8"/>
<rect x="1018.5" y="284.4" width="8" height="8"/>
<rect x="1012.9" y="285.1" width="8" height="8"/>
<rect x="1007.0" y="285.7" width="8" height="8"/>
<rect x="1001.6" y="286.5" width="8" height="8"/>
<rect x="996.4" y="287.3" width="8" height="8"/>
<rect x="990.8" y="289.0" width="8" height="8"/>
<rect x="985.7" y="291.0" width="8" height="8"/>
<rect x="981.3" y="294.7" width="8" height="8"/>
<rect x="977.1" y="298.3" width="8" height="8"/>
</g>
<g stroke="#66ccaa" stroke-width="1.15">
<rect x="970.9" y="308.1" width="8" height="8"/>
<rect x="968.5" y="312.9" width="8" height="8"/>
<rect x="967.8" y="318.3" width="8" height="8"/>
<rect x="968.7" y="323.5" width="8" height="8"/>
<rect x="970.8" y="328.8" width="8" height="8"/>
<rect x="973.2" y="333.3" width="8" height="8"/>
<rect x="976.1" y="337.9" width="8" height="8"/>
<rect x="979.8" y="341.9" width="8" height="8"/>
<rect x="983.7" y="345.9" width="8" height="8"/>
<rect x="987.7" y="349.1" width="8" height="8"/>
<rect x="991.8" y="352.8" width="8" height="8"/>
<rect x="994.8" y="357.5" width="8" height="8"/>
<rect x="997.6" y="361.7" width="8" height="8"/>
<rect x="1000.0" y="366.7" width="8" height="8"/>
<rect x="1001.8" y="371.8" width="8" height="8"/>
<rect x="1000.6" y="377.1" width="8" height="8"/>
<rect x="998.3" y="381.9" width="8" height="8"/>
<rect x="994.6" y="385.8" width="8" height="8"/>
<rect x="990.6" y="389.1" width="8" height="8"/>
</g>
<g stroke="#66ccaa" stroke-width="1.15">
<rect x="982.6" y="394.4" width="8" height="8"/>
<rect x="975.8" y="396.8" width="8" height="8"/>
<rect x="968.8" y="398.1" width="8" height="8"/>
<rect x="961.5" y="399.4" width="8" height="8"/>
<rect x="954.5" y="399.2" width="8" height="8"/>
<rect x="947.2" y="399.2" width="8" height="8"/>
<rect x="940.0" y="398.2" width="8" height="8"/>
<rect x="933.3" y="396.4" width="8" height="8"/>
<rect x="926.8" y="393.0" width="8" height="8"/>
<rect x="921.2" y="388.7" width="8" height="8"/>
<rect x="917.1" y="383.0" width="8" height="8"/>
<rect x="913.1" y="376.9" width="8" height="8"/>
<rect x="910.4" y="369.9" width="8" height="8"/>
<rect x="909.0" y="363.1" width="8" height="8"/>
<rect x="908.4" y="355.9" width="8" height="8"/>
<rect x="906.6" y="348.9" width="8" height="8"/>
<rect x="904.7" y="342.1" width="8" height="8"/>
<rect x="902.5" y="335.1" width="8" height="8"/>
<rect x="899.5" y="328.8" width="8" height="8"/>
<rect x="895.9" y="322.1" width="8" height="8"/>
<rect x="891.7" y="316.3" width="8" height="8"/>
<rect x="886.6" y="311.5" width="8" height="8"/>
</g>
<g stroke="#66ccaa" stroke-width="1.15">
<rect x="879.4" y="307.9" width="8" height="8"/>
<rect x="873.1" y="307.5" width="8" height="8"/>
<rect x="867.2" y="307.2" width="8" height="8"/>
<rect x="860.9" y="307.2" width="8" height="8"/>
<rect x="855.1" y="306.6" width="8" height="8"/>
<rect x="849.1" y="306.6" width="8" height="8"/>
<rect x="843.2" y="307.2" width="8" height="8"/>
<rect x="837.5" y="308.4" width="8" height="8"/>
<rect x="831.9" y="310.0" width="8" height="8"/>
<rect x="825.6" y="311.8" width="8" height="8"/>
<rect x="820.9" y="314.7" width="8" height="8"/>
<rect x="816.7" y="319.3" width="8" height="8"/>
<rect x="813.9" y="324.0" width="8" height="8"/>
<rect x="810.3" y="329.6" width="8" height="8"/>
<rect x="807.1" y="334.0" width="8" height="8"/>
<rect x="803.4" y="338.9" width="8" height="8"/>
<rect x="800.0" y="344.2" width="8" height="8"/>
<rect x="796.3" y="348.4" width="8" height="8"/>
<rect x="791.8" y="352.4" width="8" height="8"/>
<rect x="786.0" y="355.0" width="8" height="8"/>
<rect x="780.8" y="357.5" width="8" height="8"/>
<rect x="775.1" y="359.4" width="8" height="8"/>
<rect x="769.3" y="360.5" width="8" height="8"/>
<rect x="763.0" y="360.4" width="8" height="8"/>
<rect x="757.2" y="359.7" width="8" height="8"/>
<rect x="751.4" y="358.3" width="8" height="8"/>
<rect x="746.0" y="355.4" width="8" height="8"/>
<rect x="740.3" y="353.0" width="8" height="8"/>
<rect x="735.2" y="350.0" width="8" height="8"/>
<rect x="730.7" y="346.1" width="8" height="8"/>
<rect x="727.1" y="341.5" width="8" height="8"/>
<rect x="723.6" y="336.9" width="8" height="8"/>
<rect x="719.5" y="332.2" width="8" height="8"/>
<rect x="716.9" y="326.8" width="8" height="8"/>
<rect x="714.6" y="321.5" width="8" height="8"/>
<rect x="712.5" y="315.5" width="8" height="8"/>
<rect x="711.2" y="309.6" width="8" height="8"/>
</g>
<g stroke="#66ccaa" stroke-width="1.15">
<rect x="710.8" y="304.7" width="8" height="8"/>
<rect x="709.5" y="299.8" width="8" height="8"/>
<rect x="709.8" y="295.0" width="8" height="8"/>
<rect x="710.1" y="290.0" width="8" height="8"/>
<rect x="712.0" y="285.1" width="8" height="8"/>
<rect x="715.3" y="280.9" width="8" height="8"/>
<rect x="718.9" y="277.9" width="8" height="8"/>
<rect x="722.7" y="275.1" width="8" height="8"/>
<rect x="726.6" y="271.7" width="8" height="8"/>
<rect x="730.3" y="268.4" width="8" height="8"/>
<rect x="731.9" y="263.6" width="8" height="8"/>
<rect x="731.5" y="258.7" width="8" height="8"/>
<rect x="729.1" y="254.4" width="8" height="8"/>
<rect x="725.2" y="251.3" width="8" height="8"/>
<rect x="720.6" y="248.9" width="8" height="8"/>
<rect x="715.7" y="248.3" width="8" height="8"/>
<rect x="710.8" y="247.8" width="8" height="8"/>
<rect x="705.7" y="247.1" width="8" height="8"/>
<rect x="700.7" y="246.4" width="8" height="8"/>
<rect x="695.9" y="246.1" width="8" height="8"/>
<rect x="690.6" y="245.9" width="8" height="8"/>
<rect x="686.1" y="245.8" width="8" height="8"/>
<rect x="680.6" y="245.5" width="8" height="8"/>
<rect x="675.6" y="244.7" width="8" height="8"/>
<rect x="671.4" y="243.6" width="8" height="8"/>
<rect x="666.6" y="241.8" width="8" height="8"/>
<rect x="662.5" y="239.0" width="8" height="8"/>
<rect x="658.7" y="235.6" width="8" height="8"/>
<rect x="655.6" y="231.7" width="8" height="8"/>
<rect x="653.1" y="227.2" width="8" height="8"/>
</g>
<g stroke="#66ccaa" stroke-width="1.15">
<rect x="650.5" y="217.9" width="8" height="8"/>
<rect x="650.5" y="208.9" width="8" height="8"/>
<rect x="650.5" y="202.9" width="8" height="8"/>
<rect x="650.5" y="196.9" width="8" height="8"/>
<rect x="652.3" y="190.0" width="8" height="8"/>
<rect x="655.5" y="179.0" width="8" height="8"/>
</g>
<g stroke="#66ccaa" stroke-width="1.15">
<rect x="655.5" y="174.6" width="8" height="8"/>
<rect x="660.9" y="168.6" width="8" height="8"/>
<rect x="661.9" y="161.6" width="8" height="8"/>
<rect x="667.9" y="154.7" width="8" height="8"/>
<rect x="668.9" y="148.7" width="8" height="8"/>
<rect x="674.9" y="143.7" width="8" height="8"/>
<rect x="678.8" y="142.1" width="8" height="8"/>
<rect x="686.8" y="139.7" width="8" height="8"/>
<rect x="689.8" y="137.3" width="8" height="8"/>
<rect x="697.8" y="133.7" width="8" height="8"/>
<rect x="701.8" y="132.7" width="8" height="8"/>
<rect x="706.4" y="128.1" width="8" height="8"/>
<rect x="715.7" y="119.8" width="8" height="8"/>
<rect x="720.3" y="114.2" width="8" height="8"/>
<rect x="724.7" y="108.4" width="8" height="8"/>
<rect x="730.7" y="101.2" width="8" height="8"/>
<rect x="738.3" y="91.9" width="8" height="8"/>
<rect x="742.6" y="84.9" width="8" height="8"/>
<rect x="747.2" y="78.9" width="8" height="8"/>
<rect x="753.0" y="74.3" width="8" height="8"/>
<rect x="761.6" y="67.9" width="8" height="8"/>
<rect x="766.6" y="66.9" width="8" height="8"/>
<rect x="773.1" y="63.5" width="8" height="8"/>
<rect x="785.1" y="62.5" width="8" height="8"/>
<rect x="793.5" y="62.5" width="8" height="8"/>
<rect x="802.6" y="63.5" width="8" height="8"/>
<rect x="816.6" y="66.9" width="8" height="8"/>
<rect x="825.0" y="70.9" width="8" height="8"/>
<rect x="833.0" y="74.3" width="8" height="8"/>
<rect x="839.9" y="77.5" width="8" height="8"/>
<rect x="850.7" y="85.9" width="8" height="8"/>
<rect x="856.7" y="92.9" width="8" height="8"/>
<rect x="861.3" y="98.8" width="8" height="8"/>
<rect x="865.8" y="105.8" width="8" height="8"/>
<rect x="871.8" y="117.8" width="8" height="8"/>
<rect x="874.2" y="119.8" width="8" height="8"/>
<rect x="879.2" y="130.3" width="8" height="8"/>
</g>
<g stroke="#66ccaa" stroke-width="1.15">
<rect x="881.0" y="130.7" width="8" height="8"/>
<rect x="888.4" y="135.1" width="8" height="8"/>
<rect x="898.9" y="141.1" width="8" height="8"/>
<rect x="903.5" y="141.1" width="8" height="8"/>
<rect x="916.3" y="142.3" width="8" height="8"/>
<rect x="924.9" y="141.1" width="8" height="8"/>
<rect x="933.8" y="139.7" width="8" height="8"/>
<rect x="942.2" y="135.1" width="8" height="8"/>
<rect x="954.8" y="127.7" width="8" height="8"/>
<rect x="963.3" y="123.4" width="8" height="8"/>
<rect x="970.1" y="117.8" width="8" height="8"/>
<rect x="977.3" y="111.8" width="8" height="8"/>
<rect x="987.9" y="102.4" width="8" height="8"/>
<rect x="995.0" y="97.8" width="8" height="8"/>
<rect x="1002.0" y="93.2" width="8" height="8"/>
<rect x="1009.2" y="89.5" width="8" height="8"/>
<rect x="1020.6" y="84.5" width="8" height="8"/>
<rect x="1023.9" y="83.9" width="8" height="8"/>
<rect x="1036.9" y="81.3" width="8" height="8"/>
<rect x="1044.5" y="81.3" width="8" height="8"/>
<rect x="1054.4" y="82.5" width="8" height="8"/>
<rect x="1058.0" y="83.5" width="8" height="8"/>
<rect x="1067.4" y="88.3" width="8" height="8"/>
<rect x="1072.4" y="91.9" width="8" height="8"/>
<rect x="1078.4" y="97.4" width="8" height="8"/>
<rect x="1080.8" y="102.4" width="8" height="8"/>
<rect x="1086.3" y="110.4" width="8" height="8"/>
<rect x="1088.7" y="116.4" width="8" height="8"/>
<rect x="1092.3" y="120.8" width="8" height="8"/>
<rect x="1094.7" y="126.7" width="8" height="8"/>
<rect x="1099.3" y="132.7" width="8" height="8"/>
<rect x="1103.3" y="136.7" width="8" height="8"/>
<rect x="1107.3" y="138.7" width="8" height="8"/>
<rect x="1112.3" y="141.1" width="8" height="8"/>
<rect x="1117.2" y="141.1" width="8" height="8"/>
<rect x="1122.2" y="141.1" width="8" height="8"/>
<rect x="1128.2" y="141.1" width="8" height="8"/>
</g>
<g stroke="#66ccaa" stroke-width="1.15">
<rect x="1108.9" y="139.1" width="8" height="8"/>
<rect x="1113.9" y="141.1" width="8" height="8"/>
<rect x="1119.8" y="141.1" width="8" height="8"/>
<rect x="1125.8" y="141.1" width="8" height="8"/>
<rect x="1131.7" y="140.7" width="8" height="8"/>
<rect x="1136.7" y="139.1" width="8" height="8"/>
<rect x="1141.6" y="138.7" width="8" height="8"/>
<rect x="1147.6" y="138.7" width="8" height="8"/>
<rect x="1153.1" y="138.7" width="8" height="8"/>
<rect x="1158.5" y="139.1" width="8" height="8"/>
<rect x="1163.4" y="140.7" width="8" height="8"/>
<rect x="1167.4" y="144.1" width="8" height="8"/>
<rect x="1171.3" y="148.0" width="8" height="8"/>
<rect x="1176.3" y="153.0" width="8" height="8"/>
<rect x="1179.3" y="157.0" width="8" height="8"/>
<rect x="1182.2" y="161.9" width="8" height="8"/>
<rect x="1185.6" y="167.3" width="8" height="8"/>
<rect x="1188.2" y="172.8" width="8" height="8"/>
</g>
<g stroke="#66ccaa" stroke-width="1.15">
<rect x="1190.2" y="178.0" width="8" height="8"/>
<rect x="1191.5" y="183.9" width="8" height="8"/>
<rect x="1191.5" y="190.9" width="8" height="8"/>
<rect x="1190.7" y="198.8" width="8" height="8"/>
<rect x="1189.6" y="208.7" width="8" height="8"/>
<rect x="1187.6" y="219.6" width="8" height="8"/>
<rect x="1186.2" y="229.5" width="8" height="8"/>
<rect x="1185.8" y="236.4" width="8" height="8"/>
<rect x="1185.8" y="244.4" width="8" height="8"/>
<rect x="1186.8" y="252.3" width="8" height="8"/>
<rect x="1189.2" y="261.2" width="8" height="8"/>
<rect x="1192.7" y="268.1" width="8" height="8"/>
<rect x="1197.1" y="275.1" width="8" height="8"/>
<rect x="1203.4" y="281.0" width="8" height="8"/>
<rect x="1212.9" y="287.4" width="8" height="8"/>
<rect x="1228.4" y="294.5" width="8" height="8"/>
</g>
<g stroke="#66ccaa" stroke-width="1.15">
<rect x="821.3" y="431.0" width="8" height="8"/>
<rect x="839.2" y="423.7" width="8" height="8"/>
<rect x="834.1" y="425.0" width="8" height="8"/>
</g>
<path d="M1240 299h5v5h-5zM1245 304v5" stroke="#66ccaa" fill="none"/>
</svg>
<div id="dash" style="position:absolute;left:834px;top:440px;width:5px;height:1px;background:#888"></div>
<div id="speck" style="position:absolute;left:1081px;top:440px;width:2px;height:1px;background:#777"></div>
<div id="con">
<div><span class="emu">[emu]</span> <span class="t">15:00:06.700</span> <span class="ok">Loaded /input.rom</span></div>
<div><span class="web">[web]</span> <span class="t">15:00:34.800</span> <span class="sp" style="width:12.6px"></span><span class="tf">01F<br>182</span><span class="tf">01F<br>182</span><span class="tf">01F<br>174</span><span class="tf">01F<br>17C</span><span class="sp" style="width:13.8px"></span><span class="tf">01F<br>17B</span><span class="tf">01F<br>174</span></div>
<div><span class="web">[web]</span> <span class="t">15:00:34.800</span> Read 882 bytes from editor...</div>
<div><span class="web">[web]</span> <span class="t">15:00:34.800</span> Assembling...</div>
<div><span class="web">[web]</span> <span class="t">15:00:34.800</span> Writing to path from assembler: temp.tal</div>
<div><span class="asm">[asm]</span> <span class="t">15:00:34.800</span> <span class="ok">Assembled output.rom in 0.07kb(0.50% used), 25 labels, 0 macros.</span></div>
<div><span class="web">[web]</span> <span class="t">15:00:34.800</span> Deleting path from assembler: temp.tal</div>
<div><span class="web">[web]</span> <span class="t">15:00:34.800</span> Reading path from assembler: output.rom</div>
<div><span class="web">[web]</span> <span class="t">15:00:34.800</span> Reloading assembler...</div>
<div><span class="web">[web]</span> <span class="t">15:00:34.800</span> Loading rom...</div>
<div><span class="web">[web]</span> <span class="t">15:00:35.300</span> Decoding rom from base64...</div>
<div><span class="web">[web]</span> <span class="t">15:00:35.300</span> Parsing rom to binary...</div>
<div><span class="web">[web]</span> <span class="t">15:00:35.300</span> Writing rom to emulator virtual file system...</div>
<div><span class="emu">[emu]</span> <span class="t">15:00:35.300</span> <span class="ok">Loaded /input.rom</span></div>
</div>
</body></html>
